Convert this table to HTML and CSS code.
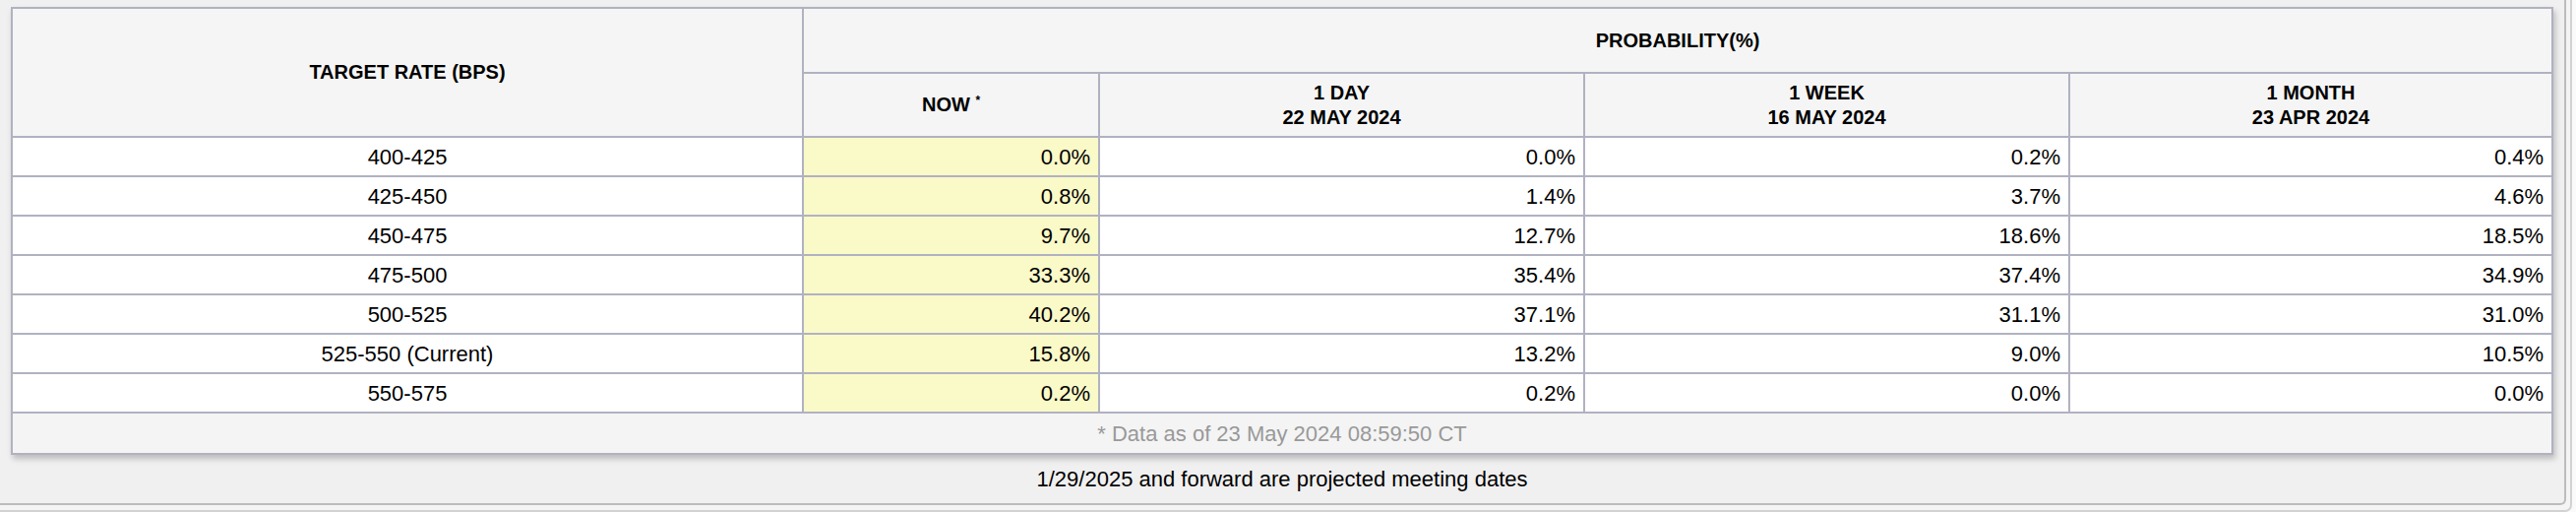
FILE: index.html
```html
<!DOCTYPE html>
<html lang="en">
<head>
<meta charset="utf-8">
<title>Target Rate Probabilities</title>
<link rel="stylesheet" href="styles.css">
</head>
<body>
<div class="outer">
  <div class="panel">
    <table class="prob-table">
      <colgroup>
        <col class="c-rate">
        <col class="c-now">
        <col class="c-day">
        <col class="c-week">
        <col class="c-month">
      </colgroup>
      <thead>
        <tr>
          <th class="h-rate" rowspan="2">TARGET RATE (BPS)</th>
          <th class="h-prob last" colspan="4">PROBABILITY(%)</th>
        </tr>
        <tr class="h-sub">
          <th>NOW <sup>*</sup></th>
          <th>1 DAY<br>22 MAY 2024</th>
          <th>1 WEEK<br>16 MAY 2024</th>
          <th class="last">1 MONTH<br>23 APR 2024</th>
        </tr>
      </thead>
      <tbody>
        <tr><td class="rate">400-425</td><td class="now">0.0%</td><td>0.0%</td><td>0.2%</td><td class="last">0.4%</td></tr>
        <tr><td class="rate">425-450</td><td class="now">0.8%</td><td>1.4%</td><td>3.7%</td><td class="last">4.6%</td></tr>
        <tr><td class="rate">450-475</td><td class="now">9.7%</td><td>12.7%</td><td>18.6%</td><td class="last">18.5%</td></tr>
        <tr><td class="rate">475-500</td><td class="now">33.3%</td><td>35.4%</td><td>37.4%</td><td class="last">34.9%</td></tr>
        <tr><td class="rate">500-525</td><td class="now">40.2%</td><td>37.1%</td><td>31.1%</td><td class="last">31.0%</td></tr>
        <tr><td class="rate">525-550 (Current)</td><td class="now">15.8%</td><td>13.2%</td><td>9.0%</td><td class="last">10.5%</td></tr>
        <tr><td class="rate">550-575</td><td class="now">0.2%</td><td>0.2%</td><td>0.0%</td><td class="last">0.0%</td></tr>
      </tbody>
      <tfoot>
        <tr><td class="foot" colspan="5">* Data as of 23 May 2024 08:59:50 CT</td></tr>
      </tfoot>
    </table>
    <p class="note">1/29/2025 and forward are projected meeting dates</p>
  </div>
</div>
</body>
</html>
```
FILE: styles.css
```css
html, body {
  margin: 0;
  padding: 0;
}
body {
  background: #fafafa;
  font-family: "Liberation Sans", Arial, Helvetica, sans-serif;
  color: #000;
  width: 2618px;
  height: 520px;
  overflow: hidden;
}
.outer {
  margin-right: 4px;
  padding: 0 4px 5px 0;
  border-right: 2px solid #d2d2d2;
  border-bottom: 2px solid #d2d2d2;
  border-bottom-right-radius: 7px;
  background: #f4f4f4;
}
.panel {
  background: #f0f0f0;
  border-right: 2px solid #bcbcbc;
  border-bottom: 2px solid #bcbcbc;
  border-bottom-right-radius: 6px;
  padding: 7px 11px 0 11px;
}
.prob-table {
  width: 2584px;
  table-layout: fixed;
  border-collapse: separate;
  border-spacing: 0;
  border: 2px solid #b0b2c1;
  background: #fff;
  box-shadow: 2px 4px 6px rgba(0, 0, 0, 0.22);
}
.c-rate { width: 804px; }
.c-now { width: 301px; }
.c-day { width: 493px; }
.c-week { width: 493px; }
.c-month { width: 489px; }
.prob-table th,
.prob-table td {
  box-sizing: border-box;
  border-right: 2px solid #b0b2c1;
  border-bottom: 2px solid #b0b2c1;
  padding: 0 8px;
}
.prob-table th.last,
.prob-table td.last {
  border-right: none;
}
.prob-table th {
  background: #f5f5f5;
  font-weight: bold;
  font-size: 20px;
  line-height: 25px;
  text-align: center;
  vertical-align: middle;
}
.h-prob { height: 66px; }
.h-sub th { height: 65px; }
.h-sub sup {
  font-size: 12px;
  vertical-align: top;
  position: relative;
  top: -4px;
}
.prob-table td {
  height: 40px;
  font-size: 22px;
  line-height: 25px;
  text-align: right;
  vertical-align: middle;
}
.prob-table td.rate { text-align: center; }
.prob-table td.now { background: #faf9c8; }
.prob-table td.foot {
  border: none;
  background: #f4f4f4;
  color: #999;
  text-align: center;
}
.note {
  margin: 0;
  height: 49px;
  line-height: 49px;
  font-size: 22px;
  text-align: center;
}
```
